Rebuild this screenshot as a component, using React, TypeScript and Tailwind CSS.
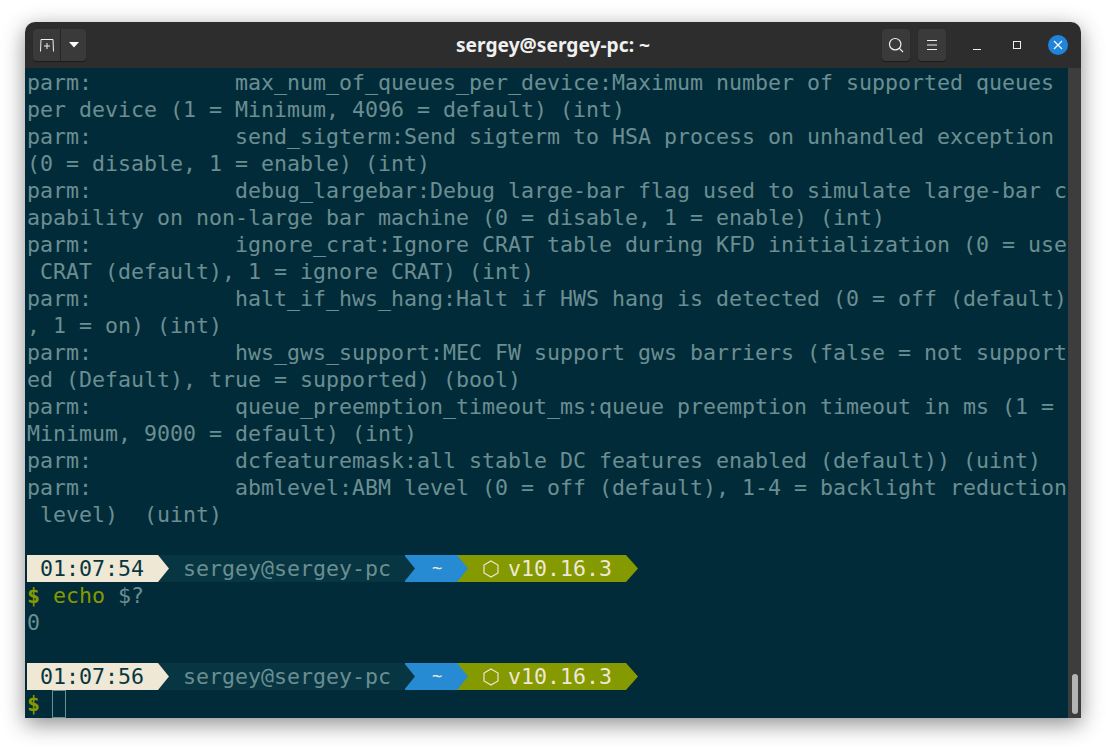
const lines = [
  'parm:           max_num_of_queues_per_device:Maximum number of supported queues',
  'per device (1 = Minimum, 4096 = default) (int)',
  'parm:           send_sigterm:Send sigterm to HSA process on unhandled exception',
  '(0 = disable, 1 = enable) (int)',
  'parm:           debug_largebar:Debug large-bar flag used to simulate large-bar c',
  'apability on non-large bar machine (0 = disable, 1 = enable) (int)',
  'parm:           ignore_crat:Ignore CRAT table during KFD initialization (0 = use',
  ' CRAT (default), 1 = ignore CRAT) (int)',
  'parm:           halt_if_hws_hang:Halt if HWS hang is detected (0 = off (default)',
  ', 1 = on) (int)',
  'parm:           hws_gws_support:MEC FW support gws barriers (false = not support',
  'ed (Default), true = supported) (bool)',
  'parm:           queue_preemption_timeout_ms:queue preemption timeout in ms (1 =',
  'Minimum, 9000 = default) (int)',
  'parm:           dcfeaturemask:all stable DC features enabled (default)) (uint)',
  'parm:           abmlevel:ABM level (0 = off (default), 1-4 = backlight reduction',
  ' level)  (uint)',
  '',
]

function Prompt({ time }: { time: string }) {
  return (
    <div className="flex h-[27px]">
      <span className="relative z-30 w-[142px] bg-[#eee8d5] pl-[13px] text-[#073642] [clip-path:polygon(0_0,131px_0,142px_50%,131px_100%,0_100%)]">
        {time}
      </span>
      <span className="relative z-20 ml-[-11px] w-[257px] bg-[#073642] pl-[25px] [clip-path:polygon(0_0,246px_0,257px_50%,246px_100%,0_100%)]">
        sergey@sergey-pc
      </span>
      <span className="relative z-10 ml-[-10px] w-[63px] bg-[#268bd2] pl-[27px] text-[17px] text-[#eee8d5] [clip-path:polygon(0_0,52px_0,63px_50%,52px_100%,0_100%)]">
        ~
      </span>
      <span className="ml-[-11px] flex w-[181px] items-center bg-[#859900] pl-[26px] text-[#eee8d5] [clip-path:polygon(0_0,169px_0,181px_50%,169px_100%,0_100%)]">
        <svg width="16" height="18" viewBox="0 0 16 18" fill="none" stroke="currentColor" strokeWidth="1.2" className="mr-[9px] shrink-0">
          <path d="M8 1 L15 5 V13 L8 17 L1 13 V5 Z" />
        </svg>
        v10.16.3
      </span>
    </div>
  )
}

function HeaderButton({ children }: { children: React.ReactNode }) {
  return (
    <div className="flex h-8 w-7 items-center justify-center rounded-[4px] bg-[#3a3a3a] shadow-[0_1px_1px_rgba(0,0,0,0.4)]">
      {children}
    </div>
  )
}

export default function App() {
  return (
    <div className="h-[747px] w-[1106px] bg-white pl-[25px] pt-[22px]">
      <div className="flex h-[696px] w-[1056px] flex-col overflow-hidden rounded-t-[10px] shadow-[0_6px_22px_rgba(0,0,0,0.45)]">
        <header className="relative flex h-[46px] shrink-0 items-center bg-[#2d2d2d] pl-2 pr-[13px]">
          <div className="flex h-8 w-[53px] rounded-[4px] bg-[#3a3a3a] shadow-[0_1px_1px_rgba(0,0,0,0.4)]">
            <div className="flex w-7 items-center justify-center border-r border-[#262626]">
              <svg width="16" height="16" viewBox="0 0 16 16" fill="none" stroke="#eeeeee" strokeWidth="1">
                <path d="M1.5 14.5 L2 2.5 H14 L14.5 14.5" />
                <path d="M5 9 H11 M8 6 V12" />
              </svg>
            </div>
            <div className="flex flex-1 items-center justify-center">
              <svg width="10" height="6" viewBox="0 0 10 6" fill="#ffffff">
                <path d="M0 0 H10 L5 5.5 Z" />
              </svg>
            </div>
          </div>
          <div className="absolute inset-x-0 text-center font-['Noto_Sans',sans-serif] text-[19.2px] font-bold text-[#f0f0f0]">
            sergey@sergey-pc: ~
          </div>
          <div className="ml-auto flex items-center">
            <div className="flex gap-2">
              <HeaderButton>
                <svg width="16" height="16" viewBox="0 0 16 16" fill="none" stroke="#eeeeee" strokeWidth="1.2">
                  <circle cx="7.2" cy="7.2" r="5.7" />
                  <path d="M11.2 11.2 L15 15" />
                </svg>
              </HeaderButton>
              <HeaderButton>
                <svg width="12" height="12" viewBox="0 0 12 12" stroke="#eeeeee" strokeWidth="1">
                  <path d="M1 1.5 H11 M1 6 H11 M1 10.5 H11" />
                </svg>
              </HeaderButton>
            </div>
            <div className="ml-[23px] flex h-5 w-[16px] items-center justify-center">
              <div className="mt-[8px] h-px w-2 bg-[#eeeeee]" />
            </div>
            <div className="ml-[24px] flex h-5 w-[16px] items-center justify-center">
              <div className="h-[8px] w-[8px] border border-[#eeeeee]" />
            </div>
            <div className="ml-[23px] flex h-5 w-5 items-center justify-center rounded-full bg-[#1f84dc]">
              <svg width="10" height="10" viewBox="0 0 10 10" stroke="#ffffff" strokeWidth="1.2">
                <path d="M1 1 L9 9 M9 1 L1 9" />
              </svg>
            </div>
          </div>
        </header>
        <div className="flex min-h-0 flex-1">
          <main className="flex-1 bg-[#022b39] pl-[2px] pt-px font-['DejaVu_Sans_Mono',monospace] text-[21.6px] leading-[27px] text-[#6b8e92]">
            {lines.map((line, i) => (
              <div key={i} className="h-[27px] whitespace-pre">
                {line}
              </div>
            ))}
            <Prompt time="01:07:54" />
            <div className="h-[27px] whitespace-pre">
              <span className="font-bold text-[#859900]">$</span> <span className="text-[#859900]">echo</span> $?
            </div>
            <div className="h-[27px]">0</div>
            <div className="h-[27px]" />
            <Prompt time="01:07:56" />
            <div className="flex h-[27px] whitespace-pre">
              <span className="font-bold text-[#859900]">$</span>
              <span className="ml-[12px] h-[28px] w-[14px] border border-[#6b8e92]" />
            </div>
          </main>
          <div className="flex w-[13px] shrink-0 flex-col justify-end bg-[#3d3d3d] pb-[4px]">
            <div className="mx-auto h-[40px] w-[6px] rounded-full bg-[#b4b4b4]" />
          </div>
        </div>
      </div>
    </div>
  )
}
